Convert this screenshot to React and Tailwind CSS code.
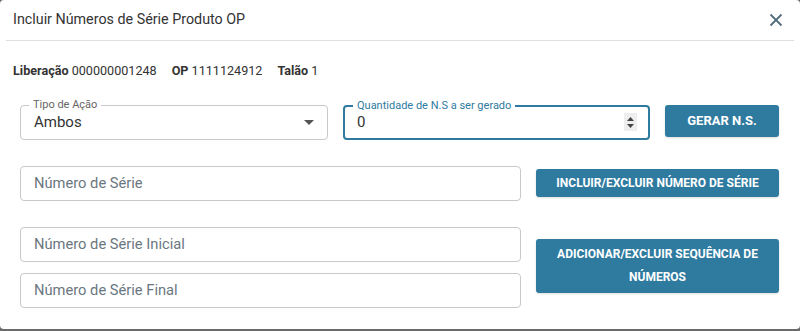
import React from 'react';

// Outlined text field with a floating label on the border
const OutlinedField = ({ label, value, placeholder, focused, children }) => (
	<div
		className={`relative h-[35px] flex items-center rounded-[4px] bg-white ${
			focused ? 'border-2 border-[#2f7b9f] pl-[12px]' : 'border border-[#c9c9c9] pl-[13px]'
		}`}
	>
		{label && (
			<span
				className={`absolute top-[-8px] left-[8px] px-[4px] bg-white text-[11px] leading-[14px] ${
					focused ? 'text-[#2f7b9f] left-[7px]' : 'text-[#666]'
				}`}
			>
				{label}
			</span>
		)}
		{value !== undefined ? (
			<span className="text-[15px] text-[#333] flex-1">{value}</span>
		) : (
			<span className="text-[14.7px] text-[#6b7780] flex-1">{placeholder}</span>
		)}
		{children}
	</div>
);

const Button = ({ children, className }) => (
	<button
		className={`bg-[#2f7b9f] text-white font-bold uppercase rounded-[3px] shadow-sm leading-[23px] ${className}`}
	>
		{children}
	</button>
);

export default function App() {
	return (
		<div className="w-[800px] h-[331px] bg-[#6b6b6b]" style={{ fontFamily: 'Roboto, "Liberation Sans", sans-serif' }}>
			<div className="h-[329px] bg-white rounded-[4px] flex flex-col">
				{/* Header */}
				<div className="h-10 flex items-center justify-between pl-[13px] pr-[17px]">
					<h2 className="text-[14.3px] text-[#333] font-normal">Incluir Números de Série Produto OP</h2>
					<svg width="14" height="14" viewBox="0 0 14 14" className="text-[#546e7a]">
						<path d="M1.5 1.5 L12.5 12.5 M12.5 1.5 L1.5 12.5" stroke="currentColor" strokeWidth="1.8" />
					</svg>
				</div>
				<div className="mx-[6px] border-b border-[#e0e0e0]" />

				{/* Info line */}
				<div className="pl-[13px] mt-[21px] text-[12.6px] text-[#333] flex gap-[15px]">
					<span>
						<b className="font-bold">Liberação</b> 000000001248
					</span>
					<span>
						<b className="font-bold">OP</b> 1111124912
					</span>
					<span>
						<b className="font-bold">Talão</b> 1
					</span>
				</div>

				<div className="pl-[20px] pr-[21px] mt-[24px] flex flex-col">
					{/* Row 1 */}
					<div className="flex items-start gap-[15px]">
						<div className="w-[308px]">
							<OutlinedField label="Tipo de Ação" value="Ambos">
								<svg width="10" height="5" viewBox="0 0 10 5" className="mr-[13px]">
									<path d="M0 0 L10 0 L5 5 Z" fill="#555" />
								</svg>
							</OutlinedField>
						</div>
						<div className="w-[307px]">
							<OutlinedField label="Quantidade de N.S a ser gerado" value="0" focused>
								<div className="mr-[11px] w-[13px] h-[18px] bg-[#eeeeee] flex flex-col items-center justify-center gap-[3px]">
									<svg width="7" height="4" viewBox="0 0 7 4">
										<path d="M0 4 L7 4 L3.5 0 Z" fill="#444" />
									</svg>
									<svg width="7" height="4" viewBox="0 0 7 4">
										<path d="M0 0 L7 0 L3.5 4 Z" fill="#444" />
									</svg>
								</div>
							</OutlinedField>
						</div>
						<Button className="w-[114px] h-[32px] text-[13px]">Gerar N.S.</Button>
					</div>

					{/* Row 2 */}
					<div className="flex items-center gap-[15px] mt-[26px]">
						<div className="w-[501px]">
							<OutlinedField placeholder="Número de Série" />
						</div>
						<Button className="w-[243px] h-[28px] text-[12px]">Incluir/Excluir Número de Série</Button>
					</div>

					{/* Row 3 */}
					<div className="flex items-center gap-[15px] mt-[26px]">
						<div className="w-[501px] flex flex-col gap-[11px]">
							<OutlinedField placeholder="Número de Série Inicial" />
							<OutlinedField placeholder="Número de Série Final" />
						</div>
						<Button className="w-[243px] h-[54px] px-3 text-[12px] mb-[2px]">Adicionar/Excluir Sequência de Números</Button>
					</div>
				</div>
			</div>
		</div>
	);
}
